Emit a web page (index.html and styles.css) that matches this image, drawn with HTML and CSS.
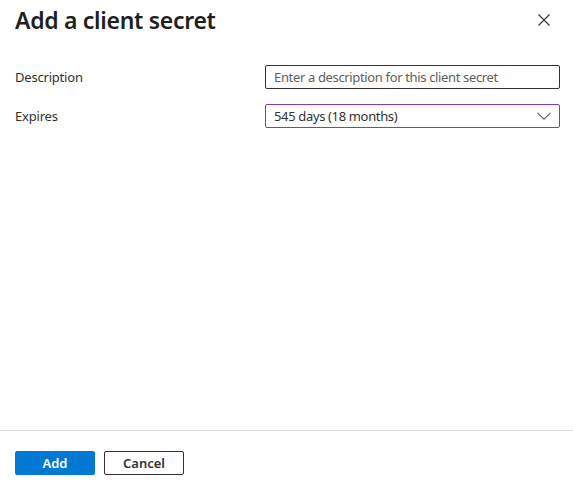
FILE: index.html
```html
<!DOCTYPE html>
<html>
<head>
<meta charset="utf-8">
<link rel="stylesheet" href="styles.css">
</head>
<body>
<div class="panel">
  <div class="header">
    <h1 class="title">Add a client secret</h1>
    <button class="close" aria-label="Close">
      <svg width="12" height="12" viewBox="0 0 12 12"><path d="M0.5 0.5L11.5 11.5M11.5 0.5L0.5 11.5" stroke="#323130" stroke-width="1.1" fill="none"/></svg>
    </button>
  </div>
  <div class="form">
    <div class="row">
      <label class="label">Description</label>
      <div class="field"><span class="placeholder">Enter a description for this client secret</span></div>
    </div>
    <div class="row">
      <label class="label">Expires</label>
      <div class="field select">
        <span class="value">545 days (18 months)</span>
        <svg class="chev" width="14" height="8" viewBox="0 0 14 8"><path d="M0.5 0.8L7 7.2L13.5 0.8" stroke="#605e5c" stroke-width="1.1" fill="none"/></svg>
      </div>
    </div>
  </div>
  <div class="footer">
    <button class="btn primary">Add</button>
    <button class="btn secondary">Cancel</button>
  </div>
</div>
</body>
</html>
```
FILE: styles.css
```css
html, body {
  margin: 0;
  padding: 0;
  background: #ffffff;
}
body {
  font-family: "Noto Sans", "Open Sans", sans-serif;
  color: #323130;
  font-size: 13px;
}
.panel {
  width: 573px;
  height: 489px;
  display: flex;
  flex-direction: column;
}
.header {
  display: flex;
  align-items: center;
  justify-content: space-between;
  height: 40px;
  padding: 0 21px 0 15px;
}
.title {
  margin: 0;
  font-size: 23px;
  font-weight: 600;
  color: #201f1e;
  letter-spacing: -0.3px;
}
.close {
  border: 0;
  background: none;
  padding: 0;
  width: 16px;
  height: 16px;
  display: flex;
  align-items: center;
  justify-content: center;
}
.form {
  flex: 1;
  display: flex;
  flex-direction: column;
  gap: 15px;
  padding: 25px 13px 0 15px;
}
.row {
  display: flex;
  align-items: center;
}
.label {
  width: 250px;
  font-size: 13px;
  letter-spacing: -0.2px;
}
.field {
  flex: 1;
  height: 24px;
  box-sizing: border-box;
  border: 1px solid #323130;
  border-radius: 2px;
  display: flex;
  align-items: center;
  padding: 0 8px;
  font-size: 13px;
  letter-spacing: -0.35px;
}
.placeholder {
  color: #605e5c;
}
.select {
  border-color: #8a3ab9;
  justify-content: space-between;
}
.footer {
  border-top: 1px solid #e1dfdd;
  height: 59px;
  display: flex;
  align-items: flex-start;
  gap: 9px;
  padding: 20px 15px 0 15px;
  box-sizing: border-box;
}
.btn {
  width: 80px;
  height: 24px;
  box-sizing: border-box;
  border-radius: 2px;
  font-family: "Noto Sans", "Open Sans", sans-serif;
  font-size: 13px;
  font-weight: 600;
  padding: 0;
}
.primary {
  background: #0078d4;
  color: #ffffff;
  border: 1px solid #0078d4;
}
.secondary {
  background: #ffffff;
  color: #323130;
  border: 1px solid #323130;
}
```
